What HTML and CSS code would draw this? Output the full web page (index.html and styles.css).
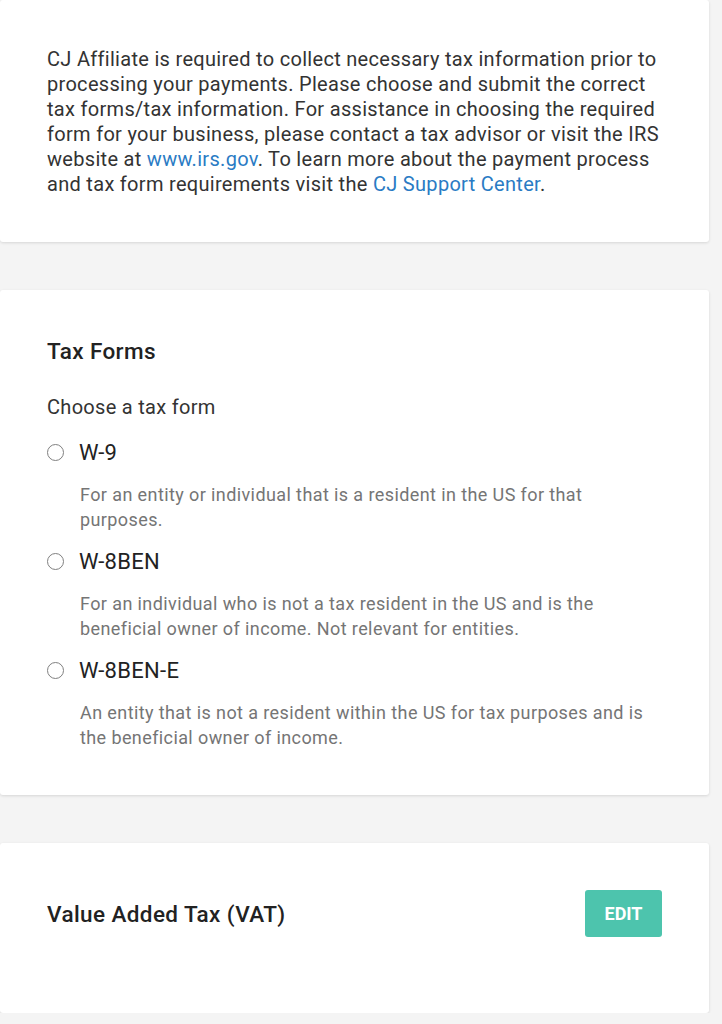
FILE: index.html
```html
<!DOCTYPE html>
<html lang="en">

<head>
    <meta charset="UTF-8">
    <meta name="viewport" content="width=device-width, initial-scale=1.0">
    <title>Tax Information</title>
    <link rel="stylesheet" href="styles.css">
</head>

<body>

    <div class="card intro">
        <p>CJ Affiliate is required to collect necessary tax information prior to
            processing your payments. Please choose and submit the correct
            tax forms/tax information. For assistance in choosing the required
            form for your business, please contact a tax advisor or visit the IRS
            website at <a href="#">www.irs.gov</a>. To learn more about the payment process
            and tax form requirements visit the <a href="#">CJ Support Center</a>.</p>
    </div>

    <div class="card forms">
        <h2 class="card-title">Tax Forms</h2>
        <p class="choose">Choose a tax form</p>

        <label class="option">
            <input type="radio" name="taxform" value="w9">
            <span class="radio"></span>
            <span class="option-name">W-9</span>
        </label>
        <p class="option-desc">For an entity or individual that is a resident in the US for that purposes.</p>

        <label class="option">
            <input type="radio" name="taxform" value="w8ben">
            <span class="radio"></span>
            <span class="option-name">W-8BEN</span>
        </label>
        <p class="option-desc">For an individual who is not a tax resident in the US and is the beneficial owner of income. Not relevant for entities.</p>

        <label class="option">
            <input type="radio" name="taxform" value="w8bene">
            <span class="radio"></span>
            <span class="option-name">W-8BEN-E</span>
        </label>
        <p class="option-desc">An entity that is not a resident within the US for tax purposes and is the beneficial owner of income.</p>
    </div>

    <div class="card vat">
        <div class="vat-row">
            <h2 class="card-title">Value Added Tax (VAT)</h2>
            <button class="edit-btn">EDIT</button>
        </div>
    </div>

</body>

</html>
```

FILE: styles.css
```css
body {
    margin: 0;
    padding: 0 13px 0 0;
    background-color: #f4f4f4;
    font-family: Roboto, "Liberation Sans", sans-serif;
    color: #333;
}

.card {
    background-color: #fff;
    border-radius: 3px;
    box-shadow: 0 1px 3px rgba(0, 0, 0, 0.12);
    padding: 47px 47px 46px;
    margin-bottom: 48px;
}

.intro {
    padding-bottom: 45px;
}

.intro p {
    margin: 0;
    font-size: 20px;
    letter-spacing: 0.3px;
    line-height: 25px;
    color: #333;
}

.intro a {
    color: #2a7bc4;
    text-decoration: none;
}

.card-title {
    margin: 0;
    font-size: 22.5px;
    font-weight: 500;
    letter-spacing: 0.4px;
    line-height: 28px;
    color: #222;
}

.forms .choose {
    margin: 30px 0 20px;
    font-size: 20px;
    letter-spacing: 0.3px;
    line-height: 25px;
    color: #333;
}

.option {
    display: flex;
    align-items: center;
    height: 24px;
    cursor: pointer;
}

.option input {
    display: none;
}

.radio {
    box-sizing: border-box;
    width: 17px;
    height: 17px;
    border: 1.5px solid #808080;
    border-radius: 50%;
}

.option input:checked+.radio {
    border: 5px solid #4dc4ad;
}

.option-name {
    margin-left: 15px;
    font-size: 22px;
    letter-spacing: 0.3px;
    color: #222;
}

.option-desc {
    margin: 18px 0 17px 33px;
    font-size: 18px;
    letter-spacing: 0.4px;
    line-height: 25px;
    color: #757575;
}

.forms .option-desc:last-child {
    margin-bottom: 0;
}

.forms {
    padding-bottom: 45px;
}

.vat {
    padding-bottom: 76px;
    margin-bottom: 0;
}

.vat-row {
    display: flex;
    align-items: center;
    justify-content: space-between;
}

.edit-btn {
    width: 77px;
    height: 47px;
    border: none;
    border-radius: 3px;
    background-color: #4dc4ad;
    color: #fff;
    font-family: Roboto, "Liberation Sans", sans-serif;
    font-size: 18px;
    font-weight: 700;
    cursor: pointer;
}
```
